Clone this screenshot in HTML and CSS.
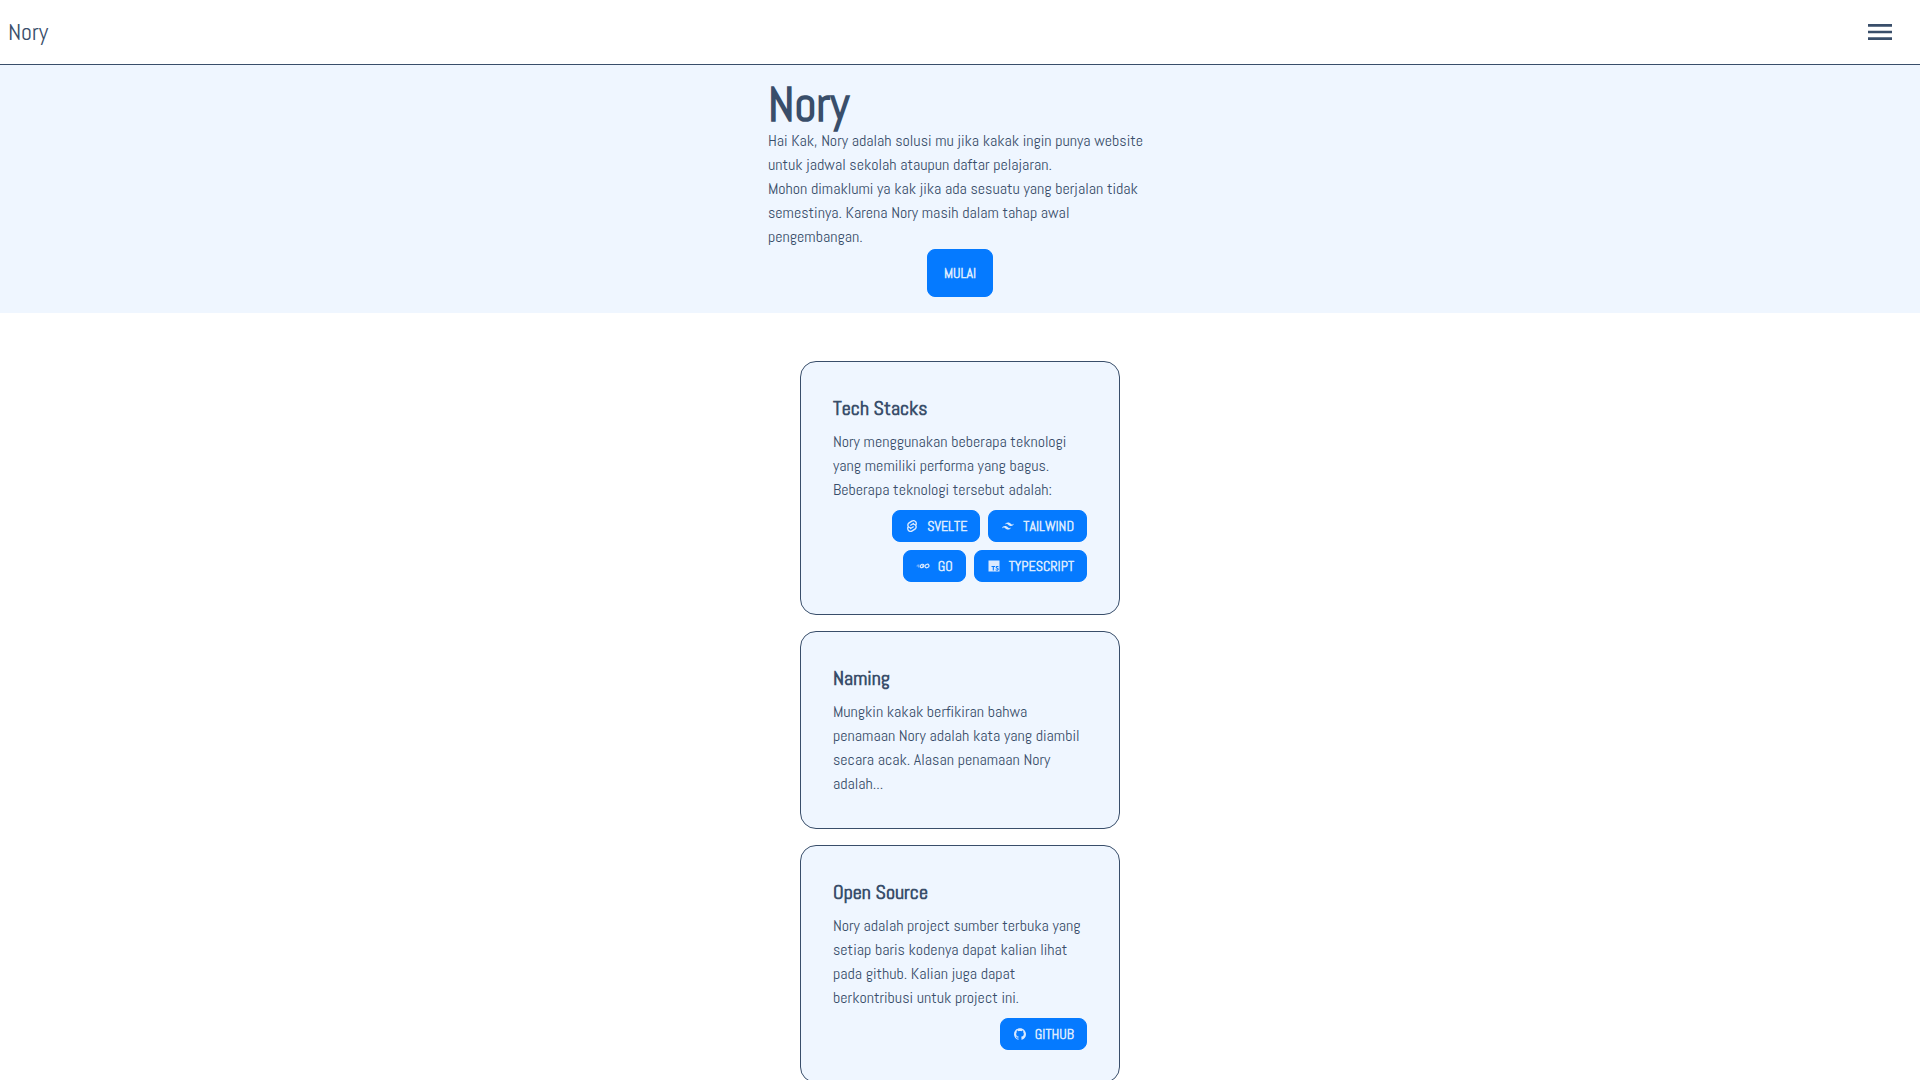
FILE: index.html
```html
<!DOCTYPE html>
<html lang="id">
<head>
<meta charset="utf-8">
<meta name="viewport" content="width=device-width, initial-scale=1">
<title>Nory</title>
<link rel="stylesheet" href="styles.css">
</head>
<body>
<header class="navbar">
  <a class="brand" href="#">Nory</a>
  <button class="menu" type="button" aria-label="Menu">
    <svg viewBox="0 0 24 16" width="24" height="16" fill="currentColor"><path d="M0 0h24v2.667H0zM0 6.667h24v2.667H0zM0 13.333h24V16H0z"/></svg>
  </button>
</header>
<main>
  <section class="hero">
    <div class="hero-content">
      <h1>Nory</h1>
      <p>Hai Kak, Nory adalah solusi mu jika kakak ingin punya website<br>untuk jadwal sekolah ataupun daftar pelajaran.</p>
      <p>Mohon dimaklumi ya kak jika ada sesuatu yang berjalan tidak<br>semestinya. Karena Nory masih dalam tahap awal<br>pengembangan.</p>
      <button class="btn btn-start" type="button">MULAI</button>
    </div>
  </section>
  <section class="cards">
    <article class="card">
      <h2>Tech Stacks</h2>
      <p>Nory menggunakan beberapa teknologi<br>yang memiliki performa yang bagus.<br>Beberapa teknologi tersebut adalah:</p>
      <div class="actions">
        <button class="btn" type="button">
          <svg class="icon" viewBox="-2 -2 28 28"><path d="M10.354 21.125a4.44 4.44 0 0 1-4.765-1.767 4.109 4.109 0 0 1-.703-3.107 3.898 3.898 0 0 1 .134-.522l.105-.321.287.21a7.21 7.21 0 0 0 2.186 1.092l.208.063-.02.208a1.253 1.253 0 0 0 .226.83 1.337 1.337 0 0 0 1.435.533 1.231 1.231 0 0 0 .343-.15l5.59-3.562a1.164 1.164 0 0 0 .524-.778 1.242 1.242 0 0 0-.211-.937 1.338 1.338 0 0 0-1.435-.533 1.23 1.23 0 0 0-.343.15l-2.133 1.36a4.078 4.078 0 0 1-1.135.499 4.44 4.44 0 0 1-4.765-1.766 4.108 4.108 0 0 1-.702-3.108 3.855 3.855 0 0 1 1.742-2.582l5.589-3.563a4.072 4.072 0 0 1 1.135-.499 4.44 4.44 0 0 1 4.765 1.767 4.109 4.109 0 0 1 .703 3.107 3.943 3.943 0 0 1-.134.522l-.105.321-.286-.21a7.204 7.204 0 0 0-2.187-1.093l-.208-.063.02-.207a1.255 1.255 0 0 0-.226-.831 1.337 1.337 0 0 0-1.435-.532 1.231 1.231 0 0 0-.343.15L8.62 9.368a1.162 1.162 0 0 0-.524.778 1.24 1.24 0 0 0 .211.937 1.338 1.338 0 0 0 1.435.533 1.235 1.235 0 0 0 .344-.151l2.132-1.36a4.067 4.067 0 0 1 1.135-.498 4.44 4.44 0 0 1 4.765 1.766 4.108 4.108 0 0 1 .702 3.108 3.857 3.857 0 0 1-1.742 2.583l-5.589 3.562a4.072 4.072 0 0 1-1.135.499m10.358-17.95C18.484-.015 14.082-.96 10.9 1.068L5.31 4.63a6.412 6.412 0 0 0-2.896 4.295 6.753 6.753 0 0 0 .666 4.336 6.43 6.43 0 0 0-.96 2.396 6.833 6.833 0 0 0 1.168 5.167c2.229 3.19 6.63 4.135 9.812 2.108l5.59-3.562a6.41 6.41 0 0 0 2.896-4.295 6.756 6.756 0 0 0-.665-4.336 6.429 6.429 0 0 0 .958-2.396 6.831 6.831 0 0 0-1.167-5.168Z"/></svg>
          SVELTE</button>
        <button class="btn" type="button">
          <svg class="icon" viewBox="-2 -2 28 28"><path d="M12 4.8c-3.2 0-5.2 1.6-6 4.8 1.2-1.6 2.6-2.2 4.2-1.8.913.228 1.565.89 2.288 1.624C13.666 10.618 15.027 12 18 12c3.2 0 5.2-1.6 6-4.8-1.2 1.6-2.6 2.2-4.2 1.8-.913-.228-1.565-.89-2.288-1.624C16.337 6.182 14.976 4.8 12 4.8zM6 12c-3.2 0-5.2 1.6-6 4.8 1.2-1.6 2.6-2.2 4.2-1.8.913.228 1.565.89 2.288 1.624C7.666 17.818 9.027 19.2 12 19.2c3.2 0 5.2-1.6 6-4.8-1.2 1.6-2.6 2.2-4.2 1.8-.913-.228-1.565-.89-2.288-1.624C10.337 13.382 8.976 12 6 12z"/></svg>
          TAILWIND</button>
        <button class="btn" type="button">
          <svg class="icon" viewBox="0 0 28 28"><path d="M3 11.500h4v1H2.500zM1 13.500h6v1H1zM4 15.500h3v1H4z"/><path d="M16 11.800C14.500 9.800 9.500 10 8.700 14c-.6 4.400 6 4.400 7-.2h-3.500" fill="none" stroke="currentColor" stroke-width="2.400"/><ellipse cx="22" cy="14" rx="4" ry="3.300" fill="none" stroke="currentColor" stroke-width="2.400" transform="rotate(-20 22 14)"/></svg>
          GO</button>
        <button class="btn" type="button">
          <svg class="icon" viewBox="-2 -2 28 28"><path fill-rule="evenodd" d="M1 1h22v22H1zM7 12v2h2.500v7h2.200v-7h2.500v-2zM21 12.600c-2.500-1.200-5.700-.7-5.700 2 0 3.200 3.900 2.400 3.900 4 0 1.200-2.400 1-4 0v2.100c2.500 1.200 6.200.8 6.200-2.300 0-3.200-4-2.500-4-3.900 0-1 2-1 3.600 0z"/></svg>
          TYPESCRIPT</button>
      </div>
    </article>
    <article class="card">
      <h2>Naming</h2>
      <p>Mungkin kakak berfikiran bahwa<br>penamaan Nory adalah kata yang diambil<br>secara acak. Alasan penamaan Nory<br>adalah...</p>
    </article>
    <article class="card">
      <h2>Open Source</h2>
      <p>Nory adalah project sumber terbuka yang<br>setiap baris kodenya dapat kalian lihat<br>pada github. Kalian juga dapat<br>berkontribusi untuk project ini.</p>
      <div class="actions">
        <button class="btn" type="button">
          <svg class="icon" viewBox="-2 -2 28 28"><path d="M12 .297c-6.630 0-12 5.373-12 12 0 5.303 3.438 9.800 8.205 11.385.6.113.82-.258.82-.577 0-.285-.01-1.040-.015-2.040-3.338.724-4.042-1.610-4.042-1.610C4.422 18.070 3.633 17.700 3.633 17.700c-1.087-.744.084-.729.084-.729 1.205.084 1.838 1.236 1.838 1.236 1.070 1.835 2.809 1.305 3.495.998.108-.776.417-1.305.760-1.605-2.665-.300-5.466-1.332-5.466-5.930 0-1.310.465-2.380 1.235-3.220-.135-.303-.540-1.523.105-3.176 0 0 1.005-.322 3.300 1.230.960-.267 1.980-.399 3-.405 1.020.006 2.040.138 3 .405 2.280-1.552 3.285-1.230 3.285-1.230.645 1.653.240 2.873.120 3.176.765.840 1.230 1.910 1.230 3.220 0 4.610-2.805 5.625-5.475 5.920.420.360.810 1.096.810 2.220 0 1.606-.015 2.896-.015 3.286 0 .315.210.690.825.570C20.565 22.092 24 17.592 24 12.297c0-6.627-5.373-12-12-12"/></svg>
          GITHUB</button>
      </div>
    </article>
  </section>
</main>
</body>
</html>
```
FILE: styles.css
```css
* { box-sizing: border-box; }
body {
  margin: 0;
  background: #fff;
  color: #394e6a;
  font: 16px/24px Abel, "Liberation Sans Narrow", "Arial Narrow", "Roboto Condensed", Roboto, sans-serif;
}
h1, h2, p { margin: 0; }
p { white-space: nowrap; }
.navbar {
  display: flex;
  align-items: center;
  justify-content: space-between;
  height: 65px;
  padding: 0 28px 0 8px;
  border-bottom: 1px solid #394e6a;
}
.brand { color: inherit; font-size: 24px; line-height: 32px; text-decoration: none; }
.menu { display: flex; padding: 0; border: 0; background: none; color: inherit; }
.hero { display: flex; justify-content: center; padding: 16px; background: #eff6ff; }
.hero-content { display: flex; flex-direction: column; width: 100%; max-width: 384px; }
h1, h2, .btn { font-kerning: none; }
h1 { font-size: 48px; line-height: 48px; }
h2 { font-size: 20px; line-height: 28px; }
.btn {
  display: inline-flex;
  align-items: center;
  justify-content: center;
  gap: 8px;
  height: 32px;
  padding: 0 12px;
  border: 1px solid #057aff;
  border-radius: 8px;
  background: #057aff;
  color: #dbeafe;
  font-family: inherit;
  font-size: 14px;
  font-weight: 700;
  line-height: 16px;
}
.btn-start { align-self: center; height: 48px; padding: 0 16px; }
.icon { width: 14px; height: 14px; fill: currentColor; }
.cards { display: flex; flex-direction: column; align-items: center; gap: 16px; padding: 48px 16px; }
.card {
  display: flex;
  flex-direction: column;
  gap: 8px;
  width: 100%;
  max-width: 320px;
  padding: 32px;
  border: 1px solid #394e6a;
  border-radius: 16px;
  background: #eff6ff;
}
.actions { display: flex; flex-wrap: wrap; justify-content: flex-end; gap: 8px; }
```
